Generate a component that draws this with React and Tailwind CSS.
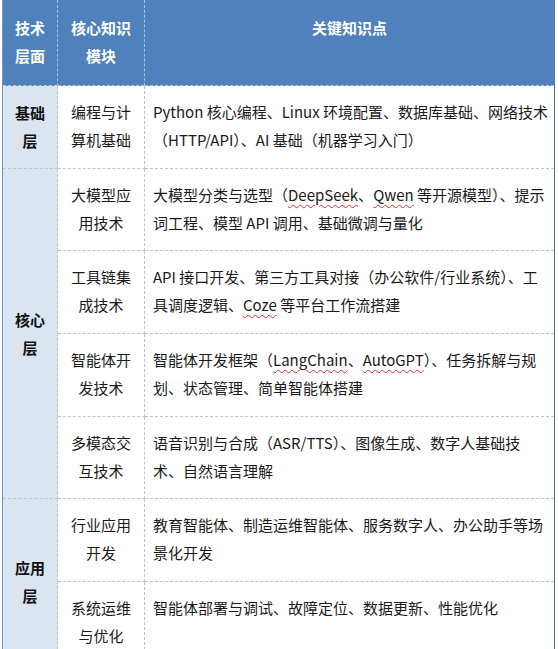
import React from "react";

const W = ({ children }) => (
  <span className="underline decoration-wavy decoration-[#e03030] decoration-1 underline-offset-[3px]">{children}</span>
);

const rows = [
  {
    layer: { lines: ["基础", "层"], span: 1 },
    mod: ["编程与计", "算机基础"],
    pts: [
      <>Python 核心编程、Linux 环境配置、数据库基础、网络技术</>,
      <>（HTTP/API）、AI 基础（机器学习入门）</>,
    ],
  },
  {
    layer: { lines: ["核心", "层"], span: 4 },
    mod: ["大模型应", "用技术"],
    pts: [
      <>大模型分类与选型（<W>DeepSeek</W>、<W>Qwen</W> 等开源模型）、提示</>,
      <>词工程、模型 API 调用、基础微调与量化</>,
    ],
  },
  {
    mod: ["工具链集", "成技术"],
    pts: [
      <>API 接口开发、第三方工具对接（办公软件/行业系统）、工</>,
      <>具调度逻辑、<W>Coze</W> 等平台工作流搭建</>,
    ],
  },
  {
    mod: ["智能体开", "发技术"],
    pts: [
      <>智能体开发框架（<W>LangChain</W>、<W>AutoGPT</W>）、任务拆解与规</>,
      <>划、状态管理、简单智能体搭建</>,
    ],
  },
  {
    mod: ["多模态交", "互技术"],
    pts: [
      <>语音识别与合成（ASR/TTS）、图像生成、数字人基础技</>,
      <>术、自然语言理解</>,
    ],
  },
  {
    layer: { lines: ["应用", "层"], span: 2 },
    mod: ["行业应用", "开发"],
    pts: [<>教育智能体、制造运维智能体、服务数字人、办公助手等场</>, <>景化开发</>],
  },
  {
    mod: ["系统运维", "与优化"],
    pts: [<>智能体部署与调试、故障定位、数据更新、性能优化</>],
  },
];

export default function App() {
  const cell = "border border-dashed border-[#c4c4c4] pt-[12px] pb-[13.7px] leading-[28px] align-top";
  return (
    <div
      className="w-[558px] bg-white text-[15px] text-[#111]"
      style={{ fontFamily: '"Noto Sans CJK SC", "Noto Sans", sans-serif' }}
    >
      <table className="ml-[2px] w-[552px] table-fixed border-collapse border-l border-l-[#7393c2] border-r border-r-[#54768a]">
        <colgroup>
          <col className="w-[55px]" />
          <col className="w-[87px]" />
          <col className="w-[410px]" />
        </colgroup>
        <thead>
          <tr className="bg-[#4f81bd] text-white font-bold">
            <th className="border-r border-dashed border-r-[#a9c1e0] pt-[14px] pb-[15px] leading-[28px] align-top text-center font-bold">
              技术<br />层面
            </th>
            <th className="border-r border-dashed border-r-[#a9c1e0] pt-[14px] pb-[15px] leading-[28px] align-top text-center font-bold">
              核心知识<br />模块
            </th>
            <th className="pt-[14px] pb-[15px] leading-[28px] align-top text-center font-bold">关键知识点</th>
          </tr>
        </thead>
        <tbody>
          {rows.map((r, i) => (
            <tr key={i}>
              {r.layer && (
                <td
                  rowSpan={r.layer.span}
                  className="border border-dashed border-[#c4c4c4] bg-[#dbe5f1] align-middle text-center font-bold leading-[28px]"
                >
                  {r.layer.lines.map((l, j) => (
                    <div key={j}>{l}</div>
                  ))}
                </td>
              )}
              <td className={`${cell} text-center text-[#1a1a1a]`}>
                {r.mod.map((l, j) => (
                  <div key={j}>{l}</div>
                ))}
              </td>
              <td className={`${cell} px-[8px] text-[#1a1a1a]`}>
                {r.pts.map((l, j) => (
                  <div key={j} className="whitespace-nowrap">
                    {l}
                  </div>
                ))}
                {r.pts.length === 1 && <div>&nbsp;</div>}
              </td>
            </tr>
          ))}
        </tbody>
      </table>
    </div>
  );
}
